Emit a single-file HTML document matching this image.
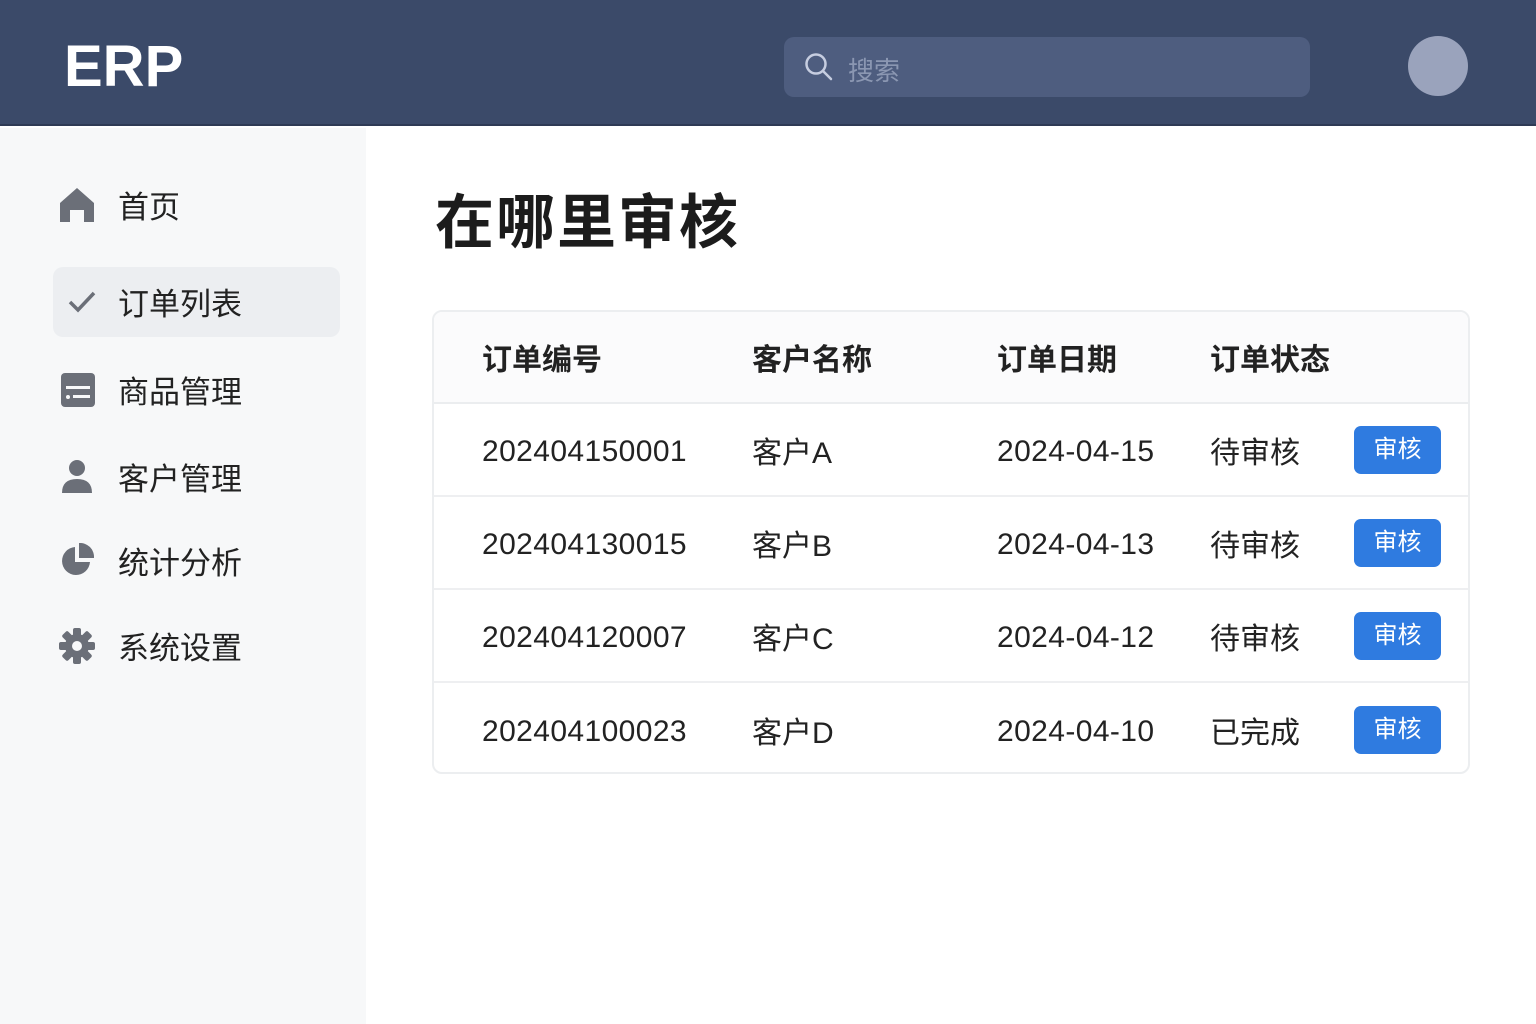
<!DOCTYPE html>
<html><head><meta charset="utf-8"><style>
*{margin:0;padding:0;box-sizing:border-box}
body{width:1536px;height:1024px;overflow:hidden;background:#fff;font-family:"Liberation Sans","Noto Sans CJK SC",sans-serif;position:relative}
.hdr{position:absolute;left:0;top:0;width:1536px;height:126px;background:#3b4a69;border-bottom:2px solid #2e3a55}
.logo{position:absolute;left:64px;top:33px;color:#fff;font-size:58px;font-weight:bold;letter-spacing:0px}
.search{position:absolute;left:784px;top:37px;width:526px;height:60px;background:#4e5d7f;border-radius:10px}
.search span{position:absolute;left:64px;top:14px;color:#8b97b2;font-size:26px}
.av{position:absolute;left:1408px;top:36px;width:60px;height:60px;border-radius:50%;background:#9aa3bc}
.side{position:absolute;left:0;top:128px;width:366px;height:896px;background:#f7f8f9}
.item{position:absolute;left:118px;font-size:31px;color:#222}
.sel{position:absolute;left:53px;top:267px;width:287px;height:70px;background:#eceef1;border-radius:10px}
.ic{position:absolute;left:58px}
h1{position:absolute;left:435px;top:175px;font-size:59px;font-weight:bold;color:#1c1c1c;letter-spacing:2px}
.card{position:absolute;left:432px;top:310px;width:1038px;height:464px;border:2px solid #eceef0;border-radius:10px;background:#fff;overflow:hidden}
.th{position:absolute;top:0;left:0;width:100%;height:92px;background:#fbfbfc;border-bottom:2px solid #ebedef}
.row{position:absolute;left:0;width:100%;height:93px;border-bottom:2px solid #eeeff1}
.c{position:absolute;font-size:30px;color:#222;top:50%;transform:translateY(-50%);white-space:nowrap}
.n{margin-top:2px;letter-spacing:0.4px}
.th .c{font-weight:bold;font-size:30px}
.btn{position:absolute;left:920px;top:50%;transform:translateY(-50%);width:87px;height:48px;background:#2f7be0;border-radius:7px;color:#fff;font-size:24px;text-align:center;line-height:48px}
</style></head><body>
<div class="hdr">
<div class="logo">ERP</div>
<div class="search">
<svg style="position:absolute;left:20px;top:15px" width="30" height="30" viewBox="0 0 30 30"><circle cx="12" cy="12" r="9.5" fill="none" stroke="#c6cde0" stroke-width="2.5"/><line x1="19" y1="19" x2="27" y2="27" stroke="#c6cde0" stroke-width="2.5" stroke-linecap="round"/></svg>
<span>搜索</span></div>
<div class="av"></div>
</div>
<div class="side">
</div>
<div class="sel"></div>
<svg class="ic" style="top:186px" width="38" height="38" viewBox="0 0 38 38"><path d="M19 2 L36 17 V36 H26 V24 H12 V36 H2 V17 Z" fill="#6b6f78"/></svg>
<div class="item" style="top:182px">首页</div>
<svg class="ic" style="top:288px;left:66px" width="32" height="28" viewBox="0 0 32 28"><path d="M4 14 L12 22 L28 5" fill="none" stroke="#6b6f78" stroke-width="3.5"/></svg>
<div class="item" style="top:279px">订单列表</div>
<svg class="ic" style="top:373px;left:61px" width="34" height="34" viewBox="0 0 34 34"><rect x="0" y="0" width="34" height="34" rx="4" fill="#6b6f78"/><rect x="5" y="13" width="24" height="3" fill="#f7f8f9"/><circle cx="7" cy="24" r="2" fill="#f7f8f9"/><rect x="12" y="22" width="17" height="3" fill="#f7f8f9"/></svg>
<div class="item" style="top:367px">商品管理</div>
<svg class="ic" style="top:459px;left:61px" width="32" height="34" viewBox="0 0 32 34"><circle cx="16" cy="9" r="8" fill="#6b6f78"/><path d="M1 34 Q1 20 16 20 Q31 20 31 34 Z" fill="#6b6f78"/></svg>
<div class="item" style="top:454px">客户管理</div>
<svg class="ic" style="top:543px;left:60px" width="34" height="34" viewBox="0 0 34 34"><path d="M15 4 A14 14 0 1 0 30 19 H15 Z" fill="#6b6f78"/><path d="M19 0 A14 14 0 0 1 34 15 H19 Z" fill="#6b6f78"/></svg>
<div class="item" style="top:538px">统计分析</div>
<svg class="ic" style="top:628px;left:59px" width="36" height="36" viewBox="0 0 36 36"><g fill="#6b6f78"><circle cx="18" cy="18" r="12"/><rect x="14" y="0" width="8" height="36" rx="2"/><rect x="14" y="0" width="8" height="36" rx="2" transform="rotate(45 18 18)"/><rect x="14" y="0" width="8" height="36" rx="2" transform="rotate(90 18 18)"/><rect x="14" y="0" width="8" height="36" rx="2" transform="rotate(135 18 18)"/></g><circle cx="18" cy="18" r="5" fill="#f7f8f9"/></svg>
<div class="item" style="top:623px">系统设置</div>
<h1>在哪里审核</h1>
<div class="card">
<div class="th"><div class="c" style="left:48px">订单编号</div><div class="c" style="left:318px">客户名称</div><div class="c" style="left:563px">订单日期</div><div class="c" style="left:776px">订单状态</div></div>
<div class="row" style="top:92px"><div class="c n" style="left:48px">202404150001</div><div class="c" style="left:318px">客户A</div><div class="c n" style="left:563px">2024-04-15</div><div class="c" style="left:776px">待审核</div><div class="btn">审核</div></div>
<div class="row" style="top:185px"><div class="c n" style="left:48px">202404130015</div><div class="c" style="left:318px">客户B</div><div class="c n" style="left:563px">2024-04-13</div><div class="c" style="left:776px">待审核</div><div class="btn">审核</div></div>
<div class="row" style="top:278px"><div class="c n" style="left:48px">202404120007</div><div class="c" style="left:318px">客户C</div><div class="c n" style="left:563px">2024-04-12</div><div class="c" style="left:776px">待审核</div><div class="btn">审核</div></div>
<div class="row" style="top:371px;border-bottom:none"><div class="c n" style="left:48px">202404100023</div><div class="c" style="left:318px">客户D</div><div class="c n" style="left:563px">2024-04-10</div><div class="c" style="left:776px">已完成</div><div class="btn">审核</div></div>
</div>
</body></html>
